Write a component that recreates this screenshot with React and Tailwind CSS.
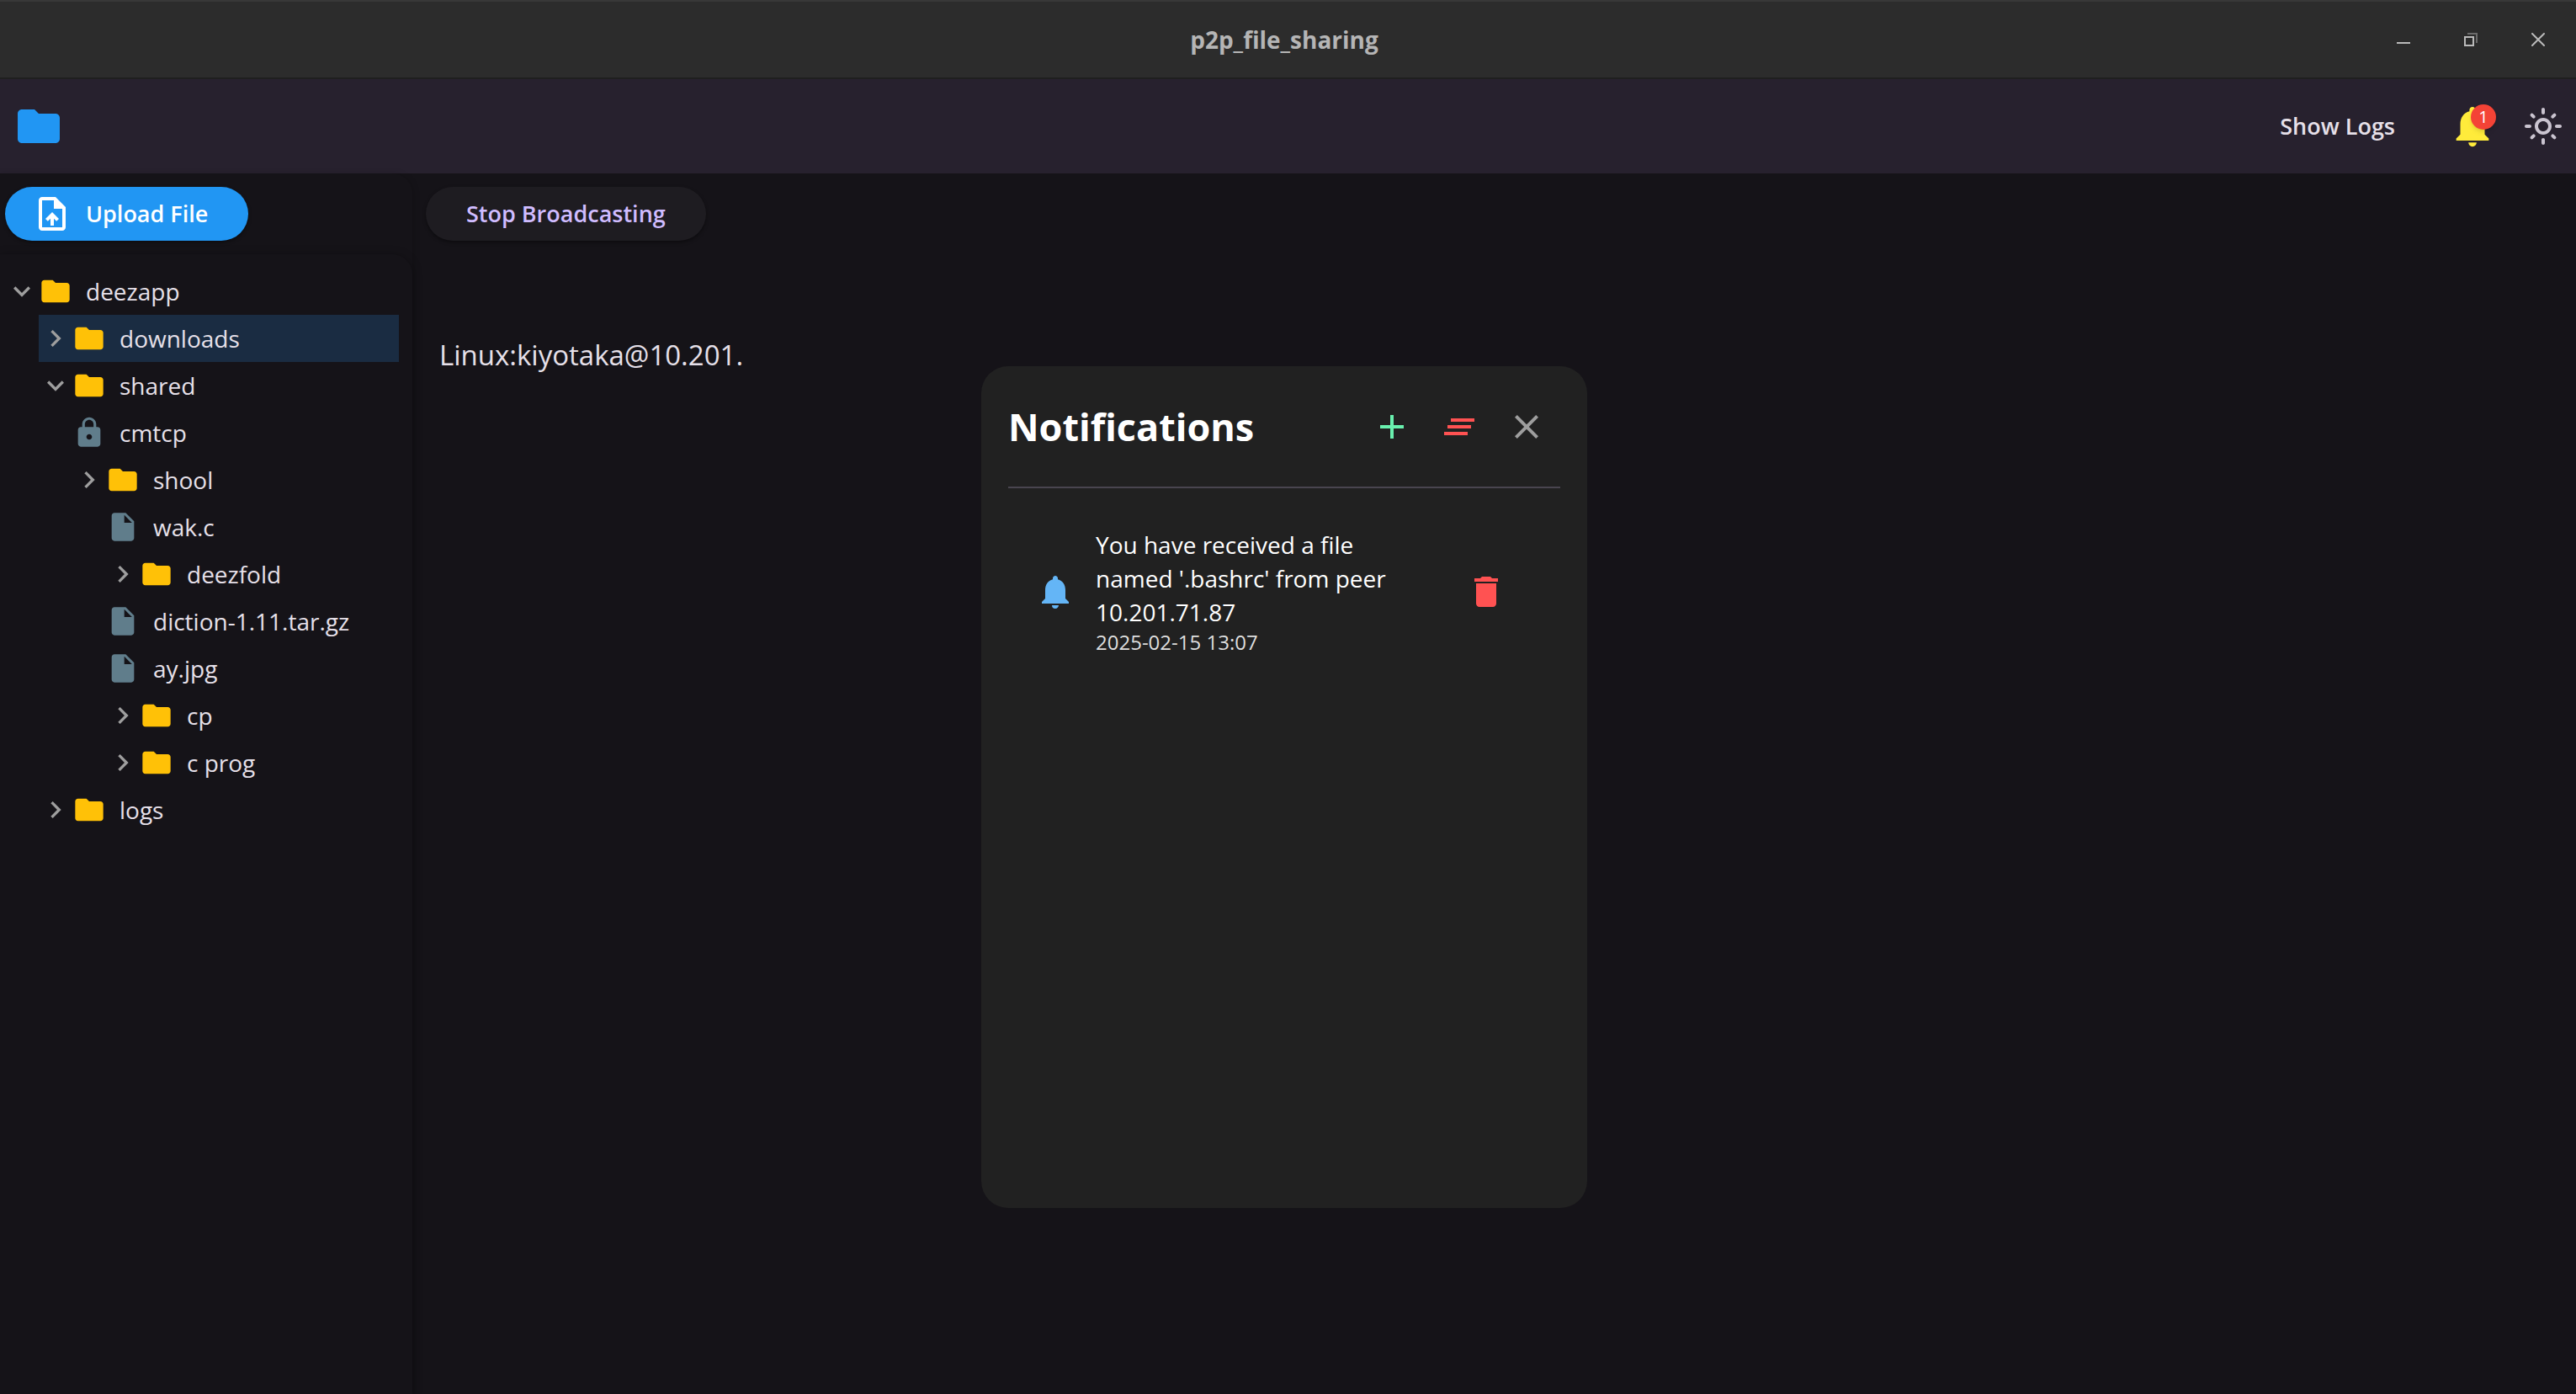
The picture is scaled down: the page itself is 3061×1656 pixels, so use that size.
import {
  MdAdd,
  MdChevronRight,
  MdClearAll,
  MdClose,
  MdDelete,
  MdExpandMore,
  MdFolder,
  MdInsertDriveFile,
  MdLock,
  MdNotifications,
  MdOutlineLightMode,
  MdOutlineUploadFile,
} from "react-icons/md";

const tree = [
  {
    name: "deezapp",
    kind: "folder",
    open: true,
    children: [
      { name: "downloads", kind: "folder", selected: true },
      {
        name: "shared",
        kind: "folder",
        open: true,
        children: [
          { name: "cmtcp", kind: "lock" },
          {
            name: "shool",
            kind: "folder",
            children: [
              { name: "wak.c", kind: "file" },
              { name: "deezfold", kind: "folder" },
              { name: "diction-1.11.tar.gz", kind: "file" },
              { name: "ay.jpg", kind: "file" },
              { name: "cp", kind: "folder" },
              { name: "c prog", kind: "folder" },
            ],
          },
        ],
      },
      { name: "logs", kind: "folder" },
    ],
  },
];

function NodeIcon({ kind }) {
  if (kind === "folder") return <MdFolder className="size-10 shrink-0 text-[#ffc107]" />;
  if (kind === "lock") return <MdLock className="size-10 shrink-0 text-[#607d8b]" />;
  return <MdInsertDriveFile className="size-10 shrink-0 text-[#607d8b]" />;
}

function TreeNode({ node }) {
  const Chevron = node.open ? MdExpandMore : MdChevronRight;
  return (
    <li>
      <button
        type="button"
        className={
          "flex h-14 w-full items-center text-left text-[28px] text-[#e6e0e9] " +
          (node.selected ? "bg-[#1a2c42]" : "")
        }
      >
        {node.kind === "folder" && <Chevron className="size-10 shrink-0 text-[#9e9e9e]" />}
        <NodeIcon kind={node.kind} />
        <span className="ml-4 leading-8">{node.name}</span>
      </button>
      {node.children && (
        <ul className="pl-10">
          {node.children.map((child) => (
            <TreeNode key={child.name} node={child} />
          ))}
        </ul>
      )}
    </li>
  );
}

function TitleBar() {
  return (
    <header className="grid h-[94px] shrink-0 grid-cols-[1fr_auto_1fr] items-center border-t-2 border-b-2 border-t-[#383838] border-b-[#1f1f1f] bg-[#2c2c2c] pr-[9px]">
      <span />
      <h1 className="text-[28px] leading-8 font-bold text-[#b5b5b5]">p2p_file_sharing</h1>
      <div className="flex justify-end gap-2 text-[#bababa]">
        <button type="button" aria-label="Minimize" className="flex h-12 w-[72px] items-center justify-center">
          <svg viewBox="0 0 16 16" className="size-4" fill="currentColor">
            <rect x="0" y="11" width="16" height="2" />
          </svg>
        </button>
        <button type="button" aria-label="Restore" className="flex h-12 w-[72px] items-center justify-center">
          <svg viewBox="0 0 16 16" className="size-4" fill="none" stroke="currentColor" strokeWidth="2">
            <rect x="1" y="5" width="10" height="10" />
            <path d="M4 1h11v11" opacity="0.45" />
          </svg>
        </button>
        <button type="button" aria-label="Close window" className="flex h-12 w-[72px] items-center justify-center">
          <svg viewBox="0 0 16 16" className="size-4" fill="none" stroke="currentColor" strokeWidth="2" strokeLinecap="round">
            <path d="M1 1l14 14M15 1L1 15" />
          </svg>
        </button>
      </div>
    </header>
  );
}

function AppBar() {
  return (
    <nav className="flex h-28 shrink-0 items-center bg-[#27212e] pr-[9px] pl-4">
      <MdFolder className="size-[60px] text-[#2196f3]" />
      <button type="button" className="mr-[38px] ml-auto h-16 px-6 text-[27px] font-semibold text-[#e6e0e9]">
        Show Logs
      </button>
      <button type="button" aria-label="Notifications" className="relative mr-6 flex size-[60px] items-center justify-center">
        <MdNotifications className="size-[58px] text-[#ffeb3b]" />
        <span className="absolute top-1 right-0.5 flex size-[30px] items-center justify-center rounded-full bg-[#f44336] text-[20px] leading-none text-white shadow-md">
          1
        </span>
      </button>
      <button type="button" aria-label="Toggle light mode" className="flex size-[60px] items-center justify-center">
        <MdOutlineLightMode className="size-12 text-[#cac4d0]" />
      </button>
    </nav>
  );
}

function Sidebar() {
  return (
    <aside className="flex w-[490px] shrink-0 flex-col rounded-tr-3xl pt-4 shadow-[0_2px_8px_rgba(0,0,0,0.25)]">
      <div className="px-1.5">
        <button
          type="button"
          className="flex h-16 items-center gap-4 rounded-full bg-[#2196f3] pr-12 pl-8 text-[27px] font-semibold text-white shadow-[0_2px_4px_rgba(0,0,0,0.4)]"
        >
          <MdOutlineUploadFile className="size-12" />
          Upload File
        </button>
      </div>
      <div className="mt-4 grow rounded-tr-3xl bg-[#151318] py-4 pr-4 pl-1.5 shadow-[0_2px_12px_rgba(0,0,0,0.35)]">
        <ul>
          {tree.map((node) => (
            <TreeNode key={node.name} node={node} />
          ))}
        </ul>
      </div>
    </aside>
  );
}

function NotificationsDialog() {
  return (
    <section
      role="dialog"
      aria-labelledby="notifications-title"
      className="min-h-[1000px] w-[720px] rounded-[32px] bg-[#212121] p-8"
    >
      <div className="flex h-20 items-center">
        <h2 id="notifications-title" className="grow text-[45px] font-bold text-white">
          Notifications
        </h2>
        <button type="button" aria-label="Add notification" className="flex size-20 items-center justify-center">
          <MdAdd className="size-12 text-[#69f0ae]" />
        </button>
        <button type="button" aria-label="Clear all" className="flex size-20 items-center justify-center">
          <MdClearAll className="size-12 text-[#ff5252]" />
        </button>
        <button type="button" aria-label="Close" className="flex size-20 items-center justify-center">
          <MdClose className="size-12 text-[#9e9e9e]" />
        </button>
      </div>
      <hr className="mt-[31px] border-t-2 border-[#49454f]" />
      <ul className="mt-[47px]">
        <li className="flex items-center pr-12 pl-8">
          <MdNotifications className="size-12 shrink-0 text-[#64b5f6]" />
          <div className="mx-6 grow">
            <p className="max-w-[360px] text-[28px] leading-10 text-white">
              You have received a file named '.bashrc' from peer 10.201.71.87
            </p>
            <time dateTime="2025-02-15T13:07" className="block text-[24px] leading-8 text-[#dedede]">
              2025-02-15 13:07
            </time>
          </div>
          <button type="button" aria-label="Delete notification" className="flex size-20 shrink-0 items-center justify-center">
            <MdDelete className="size-12 text-[#ff5252]" />
          </button>
        </li>
      </ul>
    </section>
  );
}

export default function App() {
  return (
    <div className="relative flex min-h-screen flex-col bg-[#151318] font-['Open_Sans','Noto_Sans',sans-serif]">
      <TitleBar />
      <AppBar />
      <div className="flex grow">
        <Sidebar />
        <main className="grow px-4 pt-4">
          <button
            type="button"
            className="h-16 rounded-full bg-[#1e1c21] px-12 text-[27px] font-semibold text-[#d0bcff] shadow-[0_2px_4px_rgba(0,0,0,0.4)]"
          >
            Stop Broadcasting
          </button>
          <p className="mt-28 px-4 text-[33px] leading-12 text-[#e6e0e9]">Linux:kiyotaka@10.201.</p>
        </main>
      </div>
      <div className="absolute inset-0 flex items-start justify-center pt-[435px] pr-[9px]">
        <NotificationsDialog />
      </div>
    </div>
  );
}
